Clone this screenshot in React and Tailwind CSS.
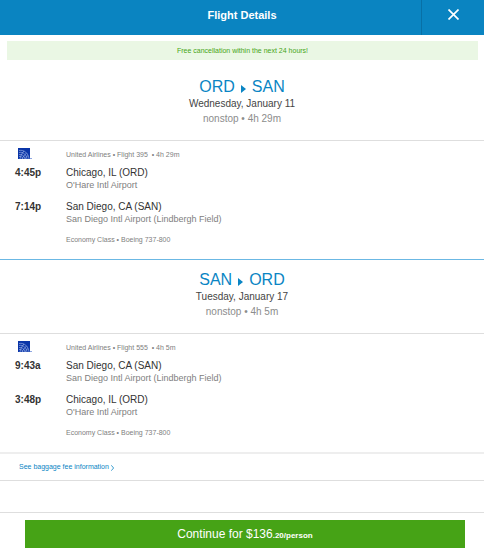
const flights = [
  {
    from: 'ORD',
    to: 'SAN',
    date: 'Wednesday, January 11',
    duration: '4h 29m',
    number: '395',
    stops: [
      { time: '4:45p', city: 'Chicago, IL (ORD)', airport: "O'Hare Intl Airport" },
      { time: '7:14p', city: 'San Diego, CA (SAN)', airport: 'San Diego Intl Airport (Lindbergh Field)' },
    ],
  },
  {
    from: 'SAN',
    to: 'ORD',
    date: 'Tuesday, January 17',
    duration: '4h 5m',
    number: '555',
    stops: [
      { time: '9:43a', city: 'San Diego, CA (SAN)', airport: 'San Diego Intl Airport (Lindbergh Field)' },
      { time: '3:48p', city: 'Chicago, IL (ORD)', airport: "O'Hare Intl Airport" },
    ],
  },
];

function AirlineLogo() {
  return (
    <svg viewBox="0 0 14 12" className="w-[14px] h-[12px]" role="img" aria-label="United Airlines">
      <rect width="12" height="11" fill="#0a35a8" />
      <g fill="none" stroke="#a9bdec" strokeWidth="0.6">
        <path d="M1 2.500C6 1.500 10.500 5 11 11" />
        <path d="M1 4.500C5 3.500 8.500 6.500 9 11" />
        <path d="M1 6.500C4 6 6.500 8 7 11" />
        <path d="M1 8.500C3 8 4.500 9 5 11" />
        <path d="M2 11C2.500 8 4 5 6 3M4 11C5 9 6.500 7 8.500 5M7 11C7.500 10 9 8 10 7.500" />
      </g>
      <rect x="12" y="10" width="2" height="1" fill="#8ea6e0" />
    </svg>
  );
}

function Flight({ flight }) {
  return (
    <section>
      <div className="text-center pt-[10px] pb-[14px] border-b border-[#dedede]">
        <h2 className="flex items-center justify-center gap-[6px] text-[16px] leading-[20px] text-[#0a85c4]">
          <span>{flight.from}</span>
          <svg viewBox="0 0 5 8" className="w-[5px] h-[8px] mt-[3px]" aria-hidden="true">
            <path d="M0 0L5 4L0 8Z" fill="currentColor" />
          </svg>
          <span>{flight.to}</span>
        </h2>
        <p className="text-[10px] leading-[14px] text-[#444]">{flight.date}</p>
        <p className="text-[10px] leading-[15px] text-[#8c8c8c]">nonstop • {flight.duration}</p>
      </div>
      <div className="grid grid-cols-[51px_1fr] px-[15px] pt-[7px] pb-[12px]">
        <div className="pl-[3px]">
          <AirlineLogo />
        </div>
        <p className="text-[7px] leading-[14px] text-[#808080] whitespace-pre">
          {`United Airlines • Flight ${flight.number}  • ${flight.duration}`}
        </p>
        {flight.stops.map((stop) => (
          <div key={stop.time} className="col-span-2 grid grid-cols-subgrid pt-[4px] pb-[5px]">
            <p className="text-[10px] leading-[13px] font-bold text-[#333]">{stop.time}</p>
            <div>
              <p className="text-[10px] leading-[13px] text-[#333]">{stop.city}</p>
              <p className="text-[9px] leading-[12px] text-[#808080]">{stop.airport}</p>
            </div>
          </div>
        ))}
        <p className="col-start-2 pt-[3px] text-[7px] leading-[14px] text-[#808080]">
          Economy Class • Boeing 737-800
        </p>
      </div>
    </section>
  );
}

export default function App() {
  return (
    <main className="bg-white pb-[2px] font-['Liberation_Sans',Arial,sans-serif]">
      <header className="grid grid-cols-[1fr_63px] h-[35px] bg-[#0a84c1] text-white">
        <h1 className="flex items-center justify-center pl-[63px] pb-[4px] text-[11px] font-bold">Flight Details</h1>
        <button type="button" aria-label="Close" className="flex items-center justify-center pb-[6px] border-l border-[#0870a6]">
          <svg viewBox="0 0 11 11" className="w-[11px] h-[11px]" aria-hidden="true">
            <path d="M0.500 0.500L10.500 10.500M10.500 0.500L0.500 10.500" stroke="currentColor" strokeWidth="1.700" />
          </svg>
        </button>
      </header>
      <p className="mt-[6px] mb-[7px] ml-[7px] mr-[6px] bg-[#eaf7e4] text-center text-[7px] leading-[19px] text-[#46a516]">
        Free cancellation within the next 24 hours!
      </p>
      <Flight flight={flights[0]} />
      <div className="border-t border-[#6bb8e4]">
        <Flight flight={flights[1]} />
      </div>
      <div className="border-t-2 border-b border-t-[#eeeeee] border-b-[#dedede] px-[19px] pt-[6px] pb-[6px] text-[7px] leading-[14px]">
        <a href="#baggage" className="flex w-fit items-center gap-[2px] text-[#0a85c4]">
          See baggage fee information
          <svg viewBox="0 0 3 6" className="w-[3px] h-[6px] mt-[2px]" aria-hidden="true">
            <path d="M0.300 0.300L2.600 3L0.300 5.700" fill="none" stroke="currentColor" strokeWidth="0.800" />
          </svg>
        </a>
      </div>
      <footer className="mt-[31px] border-t border-[#dedede] pt-[7px] pl-[25px] pr-[19px]">
        <button type="button" className="w-full h-[28px] bg-[#46a316] text-white text-[12px]">
          Continue for $136<span className="text-[8px] font-bold">.20/person</span>
        </button>
      </footer>
    </main>
  );
}
